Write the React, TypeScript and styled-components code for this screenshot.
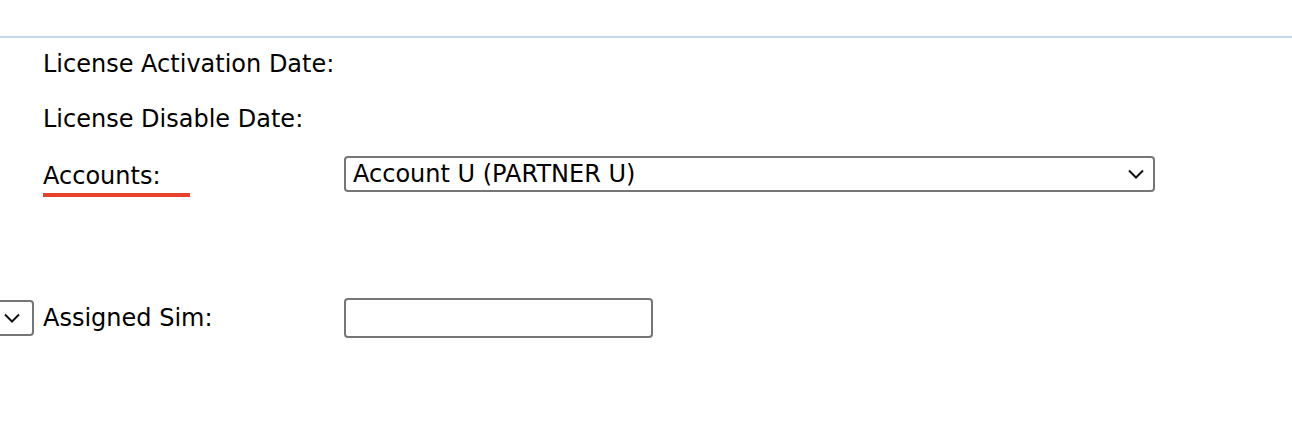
import styled, { createGlobalStyle } from "styled-components";

const chevron =
  "data:image/svg+xml;utf8," +
  encodeURIComponent(
    `<svg xmlns="http://www.w3.org/2000/svg" width="16" height="10" viewBox="0 0 16 10"><path d="M1 1.5 L8 8.5 L15 1.5" fill="none" stroke="#111" stroke-width="2"/></svg>`
  );

const GlobalStyle = createGlobalStyle`
  html, body {
    margin: 0;
    padding: 0;
    background: #ffffff;
    font-family: "DejaVu Sans", Verdana, sans-serif;
    color: #000000;
  }
`;

const Page = styled.div`
  width: 1292px;
  height: 444px;
  overflow: hidden;
  padding-top: 36px;
  box-sizing: border-box;
`;

const Divider = styled.div`
  height: 2px;
  background: #c6d8f0;
`;

const Form = styled.div`
  display: grid;
  grid-template-columns: 300px 1fr;
  grid-template-rows: repeat(3, 55px) auto;
  margin-top: -2px;
  padding-left: 43px;
`;

// each row puts its two cells straight into the form grid
const Row = styled.div`
  display: contents;
`;

const LabelCell = styled.div<{ $top?: number }>`
  display: flex;
  align-items: center;
  gap: 9px;
  padding-top: ${(p) => p.$top ?? 0}px;
`;

const FieldCell = styled.div<{ $top?: number }>`
  display: flex;
  align-items: center;
  padding-top: ${(p) => p.$top ?? 0}px;
`;

const Label = styled.span<{ $marked?: boolean }>`
  font-size: 24px;
  line-height: 28px;
  white-space: nowrap;
  ${(p) =>
    p.$marked &&
    `
    display: inline-block;
    width: 147px;
    padding-bottom: 3px;
    border-bottom: 4px solid #e8412c;
    margin-top: 11px;
  `}
`;

const Select = styled.select<{ $width: number }>`
  appearance: none;
  -webkit-appearance: none;
  box-sizing: border-box;
  width: ${(p) => p.$width}px;
  height: 36px;
  border: 2px solid #767676;
  border-radius: 4px;
  background: #ffffff url("${chevron}") no-repeat right 9px center;
  font-family: "DejaVu Sans", Verdana, sans-serif;
  font-size: 24px;
  color: #000000;
  padding: 0 36px 0 7px;
  margin-left: 1px;
`;

const StubSelect = styled(Select)`
  margin-left: -69px;
  padding: 0;
  background-position: right 12px center;
`;

const TextInput = styled.input`
  box-sizing: border-box;
  width: 309px;
  height: 40px;
  border: 2px solid #767676;
  border-radius: 4px;
  background: #ffffff;
  font-family: "DejaVu Sans", Verdana, sans-serif;
  font-size: 24px;
  margin-left: 1px;
`;

export default function App() {
  return (
    <Page>
      <GlobalStyle />
      <Divider />
      <Form>
        <Row>
          <LabelCell>
            <Label>License Activation Date:</Label>
          </LabelCell>
          <FieldCell />
        </Row>
        <Row>
          <LabelCell>
            <Label>License Disable Date:</Label>
          </LabelCell>
          <FieldCell />
        </Row>
        <Row>
          <LabelCell>
            <Label $marked>Accounts:</Label>
          </LabelCell>
          <FieldCell>
            <Select $width={811} defaultValue="u">
              <option value="u">Account U (PARTNER U)</option>
            </Select>
          </FieldCell>
        </Row>
        <Row>
          <LabelCell $top={97}>
            <StubSelect $width={60} aria-label="prefix">
              <option value=""></option>
            </StubSelect>
            <Label>Assigned Sim:</Label>
          </LabelCell>
          <FieldCell $top={97}>
            <TextInput type="text" />
          </FieldCell>
        </Row>
      </Form>
    </Page>
  );
}
